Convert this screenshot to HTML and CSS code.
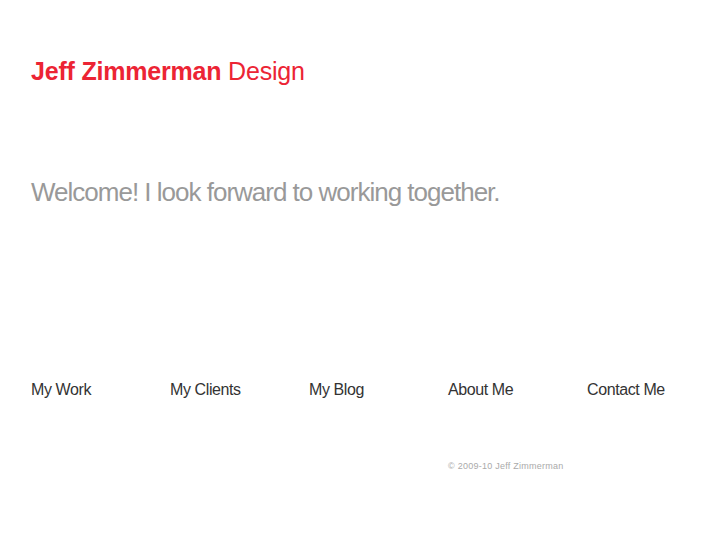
FILE: index.html
```html
<!DOCTYPE html>
<html lang="en">
<head>
    <meta charset="UTF-8">
    <title>Jeff Zimmerman Design</title>
    <link rel="stylesheet" href="styles.css">
</head>
<body>

    <div class="page">
        <!-- Logo -->
        <h1 class="logo"><b>Jeff Zimmerman</b> Design</h1>

        <!-- Intro -->
        <p class="welcome">Welcome! I look forward to working together.</p>

        <!-- Navigation -->
        <ul class="nav">
            <li><a href="#">My Work</a></li>
            <li><a href="#">My Clients</a></li>
            <li><a href="#">My Blog</a></li>
            <li><a href="#">About Me</a></li>
            <li><a href="#">Contact Me</a></li>
        </ul>

        <!-- Footer -->
        <p class="footer">&copy; 2009-10 Jeff Zimmerman</p>
    </div>

</body>
</html>
```

FILE: styles.css
```css
/* General */
body {
    font-family: "Liberation Sans", Arial, sans-serif;
    background: #fff;
    margin: 0;
    padding: 0;
}
.page {
    padding: 56px 0 0 31px;
}
/* Logo */
.logo {
    margin: 0;
    font-size: 25px;
    font-weight: normal;
    line-height: 30px;
    color: #ec2434;
    letter-spacing: -0.2px;
}
.logo b {
    font-weight: bold;
}
/* Welcome */
.welcome {
    margin: 90px 0 0;
    font-size: 26px;
    line-height: 32px;
    color: #999;
    letter-spacing: -1px;
}
/* Navigation */
.nav {
    list-style: none;
    margin: 172px 0 0;
    padding: 0;
    display: flex;
}
.nav li {
    width: 139px;
}
.nav a {
    font-size: 16px;
    line-height: 20px;
    color: #333;
    text-decoration: none;
    letter-spacing: -0.4px;
}
/* Footer */
.footer {
    margin: 61px 0 0 417px;
    font-size: 9px;
    color: #aaa;
    letter-spacing: 0.25px;
}
```
